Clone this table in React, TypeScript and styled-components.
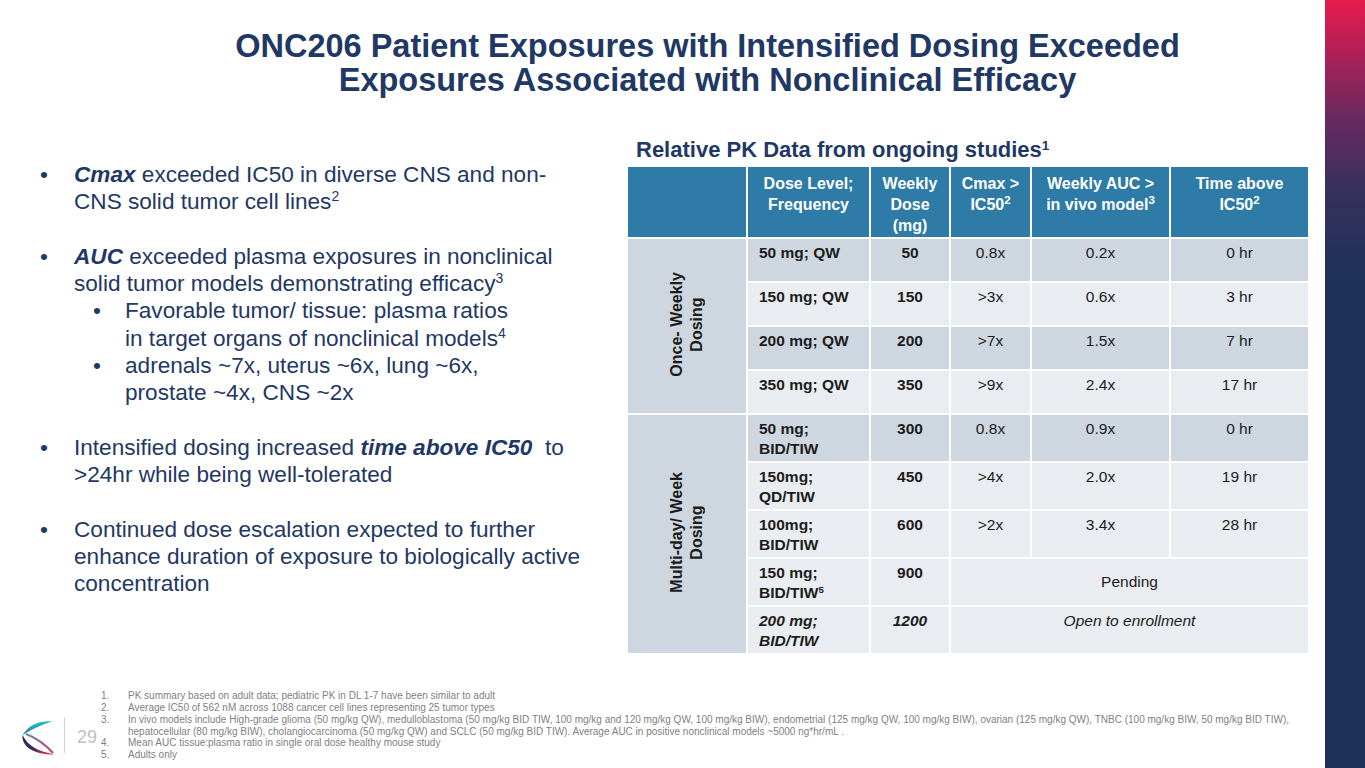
import React from 'react';
import styled, { createGlobalStyle } from 'styled-components';

const Global = createGlobalStyle`
  html, body { margin: 0; padding: 0; background: #fff; }
  body { font-family: "Liberation Sans", Arial, sans-serif; }
  * { box-sizing: border-box; }
`;

const NAVY = '#1f3864';

const Slide = styled.div`
  width: 1365px;
  height: 768px;
  display: flex;
  overflow: hidden;
  background: #fff;
`;

const Main = styled.div`
  flex: 1;
  min-width: 0;
  display: flex;
  flex-direction: column;
`;

const Stripe = styled.div`
  width: 40px;
  flex: none;
  background: linear-gradient(
    to bottom,
    #e71b4c 0%,
    #a6225a 8%,
    #6a295f 15%,
    #36305c 25%,
    #1e3258 36%,
    #1d3158 100%
  );
`;

const Title = styled.h1`
  margin: 0;
  padding: 29px 0 0 90px;
  text-align: center;
  font-size: 32.5px;
  line-height: 34px;
  font-weight: 700;
  color: ${NAVY};
`;

const Content = styled.div`
  display: flex;
  align-items: flex-start;
`;

const LeftCol = styled.div`
  width: 626px;
  flex: none;
  padding: 64px 0 0 40px;
  color: ${NAVY};
  font-size: 22.6px;
  line-height: 27.3px;
`;

const Bullet = styled.div<{ $first?: boolean }>`
  display: flex;
  margin-top: ${p => (p.$first ? 0 : 27.3)}px;
`;

const SubBullet = styled.div`
  display: flex;
  margin-left: 19px;
`;

const Dot = styled.span<{ $w: number }>`
  width: ${p => p.$w}px;
  flex: none;
`;

const Text = styled.div`
  white-space: nowrap;
`;

const Em = styled.b`
  font-weight: 700;
  font-style: italic;
`;

const Sup = styled.sup<{ $size?: number }>`
  font-size: ${p => p.$size ?? 0.62}em;
  line-height: 0;
  vertical-align: 0.55em;
`;

const RightCol = styled.div`
  flex: none;
  padding-top: 40px;
`;

const TableTitle = styled.h2`
  margin: 0 0 2px;
  padding-left: 10px;
  font-size: 22px;
  line-height: 26px;
  font-weight: 700;
  color: ${NAVY};
`;

const Table = styled.table`
  border-collapse: collapse;
  table-layout: fixed;
  width: 682px;
  font-family: "Liberation Sans", Arial, sans-serif;
`;

const Row = styled.tr<{ $h: number; $dark?: boolean }>`
  height: ${p => p.$h}px;
  background: ${p => (p.$dark ? '#ced6df' : '#e9ecf0')};
`;

const Th = styled.th`
  background: #2d7ba6;
  color: #fff;
  font-weight: 700;
  font-size: 16px;
  line-height: 21px;
  text-align: center;
  vertical-align: top;
  padding: 6px 3px 0;
  border: 2px solid #fff;
`;

const Td = styled.td<{ $bold?: boolean; $left?: boolean; $italic?: boolean; $middle?: boolean }>`
  border: 2px solid #fff;
  font-size: 15.5px;
  line-height: 20px;
  color: #1c1c1c;
  font-weight: ${p => (p.$bold ? 700 : 400)};
  font-style: ${p => (p.$italic ? 'italic' : 'normal')};
  text-align: ${p => (p.$left ? 'left' : 'center')};
  vertical-align: ${p => (p.$middle ? 'middle' : 'top')};
  padding: ${p => (p.$middle ? '0 4px' : p.$left ? '4px 4px 0 11px' : '4px 4px 0')};
`;

const LabelCell = styled.td`
  border: 2px solid #fff;
  background: #ced6df;
  text-align: center;
  vertical-align: middle;
  padding: 0;
`;

const Vertical = styled.div`
  display: inline-block;
  writing-mode: vertical-rl;
  transform: rotate(180deg);
  font-size: 16px;
  line-height: 20px;
  font-weight: 700;
  color: #1c1c1c;
  text-align: center;
`;

const Footer = styled.footer`
  margin-top: auto;
  display: flex;
  align-items: flex-start;
  padding: 0 0 7px 20px;
`;

const LogoSvg = styled.svg`
  flex: none;
  margin-top: 29px;
`;

const Separator = styled.div`
  width: 1px;
  height: 36px;
  flex: none;
  margin: 27px 0 0 8px;
  background: #d4d4d4;
`;

const PageNum = styled.div`
  width: 36px;
  flex: none;
  margin-top: 37px;
  padding-left: 12px;
  font-size: 18px;
  line-height: 20px;
  color: #c0c0c0;
`;

const Notes = styled.ol`
  margin: 0;
  padding: 0;
  list-style: none;
  font-size: 10px;
  line-height: 11.8px;
  color: #7f7f7f;
`;

const Note = styled.li`
  display: flex;
  white-space: nowrap;
`;

const NoteNum = styled.span`
  width: 27px;
  flex: none;
`;

const Logo = () => (
  <LogoSvg viewBox="0 0 36 38" width={36} height={38}>
    <defs>
      <linearGradient id="lgTop" x1="1" y1="0" x2="0" y2="1">
        <stop offset="0" stopColor="#1fcaca" />
        <stop offset="0.5" stopColor="#22a8bb" />
        <stop offset="1" stopColor="#4a7c9b" />
      </linearGradient>
      <linearGradient id="lgMid" x1="0" y1="0" x2="1" y2="1">
        <stop offset="0" stopColor="#6f8aa6" />
        <stop offset="1" stopColor="#c8416b" />
      </linearGradient>
      <linearGradient id="lgBot" x1="0" y1="0" x2="1" y2="1">
        <stop offset="0" stopColor="#15285a" />
        <stop offset="0.5" stopColor="#352c5c" />
        <stop offset="0.8" stopColor="#b3265a" />
        <stop offset="1" stopColor="#ea1f4f" />
      </linearGradient>
    </defs>
    <path d="M32 2.5 C22 1.5 8 5.5 2.5 16.5 C10 11 20 6.5 32 2.5 Z" fill="url(#lgTop)" />
    <path d="M6 15 C14 18 24 24 33 34" stroke="url(#lgMid)" strokeWidth="2.2" fill="none" />
    <path d="M2.5 16 C1.5 28 14 35.5 34.5 35.5 C17 32 8 27 2.5 16 Z" fill="url(#lgBot)" />
  </LogoSvg>
);

export default function App() {
  return (
    <Slide>
      <Global />
      <Main>
        <Title>
          ONC206 Patient Exposures with Intensified Dosing Exceeded
          <br />
          Exposures Associated with Nonclinical Efficacy
        </Title>
        <Content>
          <LeftCol>
            <Bullet $first>
              <Dot $w={34}>•</Dot>
              <Text>
                <Em>Cmax</Em> exceeded IC50 in diverse CNS and non-
                <br />
                CNS solid tumor cell lines<Sup>2</Sup>
              </Text>
            </Bullet>
            <Bullet>
              <Dot $w={34}>•</Dot>
              <div>
                <Text>
                  <Em>AUC</Em> exceeded plasma exposures in nonclinical
                  <br />
                  solid tumor models demonstrating efficacy<Sup>3</Sup>
                </Text>
                <SubBullet>
                  <Dot $w={32}>•</Dot>
                  <Text>
                    Favorable tumor/ tissue: plasma ratios
                    <br />
                    in target organs of nonclinical models<Sup>4</Sup>
                  </Text>
                </SubBullet>
                <SubBullet>
                  <Dot $w={32}>•</Dot>
                  <Text>
                    adrenals ~7x, uterus ~6x, lung ~6x,
                    <br />
                    prostate ~4x, CNS ~2x
                  </Text>
                </SubBullet>
              </div>
            </Bullet>
            <Bullet>
              <Dot $w={34}>•</Dot>
              <Text>
                Intensified dosing increased <Em>time above IC50</Em>&nbsp; to
                <br />
                &gt;24hr while being well-tolerated
              </Text>
            </Bullet>
            <Bullet>
              <Dot $w={34}>•</Dot>
              <Text>
                Continued dose escalation expected to further
                <br />
                enhance duration of exposure to biologically active
                <br />
                concentration
              </Text>
            </Bullet>
          </LeftCol>
          <RightCol>
            <TableTitle>
              Relative PK Data from ongoing studies<Sup>1</Sup>
            </TableTitle>
            <Table>
              <colgroup>
                <col style={{ width: 120 }} />
                <col style={{ width: 123 }} />
                <col style={{ width: 80 }} />
                <col style={{ width: 81 }} />
                <col style={{ width: 139 }} />
                <col style={{ width: 139 }} />
              </colgroup>
              <thead>
                <tr style={{ height: 72 }}>
                  <Th />
                  <Th>
                    Dose Level;
                    <br />
                    Frequency
                  </Th>
                  <Th>
                    Weekly
                    <br />
                    Dose
                    <br />
                    (mg)
                  </Th>
                  <Th>
                    Cmax &gt;
                    <br />
                    IC50<Sup $size={0.72}>2</Sup>
                  </Th>
                  <Th>
                    Weekly AUC &gt;
                    <br />
                    in vivo model<Sup $size={0.72}>3</Sup>
                  </Th>
                  <Th>
                    Time above
                    <br />
                    IC50<Sup $size={0.72}>2</Sup>
                  </Th>
                </tr>
              </thead>
              <tbody>
                <Row $h={44} $dark>
                  <LabelCell rowSpan={4}>
                    <Vertical>
                      Once- Weekly
                      <br />
                      Dosing
                    </Vertical>
                  </LabelCell>
                  <Td $bold $left>50 mg; QW</Td>
                  <Td $bold>50</Td>
                  <Td>0.8x</Td>
                  <Td>0.2x</Td>
                  <Td>0 hr</Td>
                </Row>
                <Row $h={44}>
                  <Td $bold $left>150 mg; QW</Td>
                  <Td $bold>150</Td>
                  <Td>&gt;3x</Td>
                  <Td>0.6x</Td>
                  <Td>3 hr</Td>
                </Row>
                <Row $h={44} $dark>
                  <Td $bold $left>200 mg; QW</Td>
                  <Td $bold>200</Td>
                  <Td>&gt;7x</Td>
                  <Td>1.5x</Td>
                  <Td>7 hr</Td>
                </Row>
                <Row $h={44}>
                  <Td $bold $left>350 mg; QW</Td>
                  <Td $bold>350</Td>
                  <Td>&gt;9x</Td>
                  <Td>2.4x</Td>
                  <Td>17 hr</Td>
                </Row>
                <Row $h={48} $dark>
                  <LabelCell rowSpan={5}>
                    <Vertical>
                      Multi-day/ Week
                      <br />
                      Dosing
                    </Vertical>
                  </LabelCell>
                  <Td $bold $left>
                    50 mg;
                    <br />
                    BID/TIW
                  </Td>
                  <Td $bold>300</Td>
                  <Td>0.8x</Td>
                  <Td>0.9x</Td>
                  <Td>0 hr</Td>
                </Row>
                <Row $h={48}>
                  <Td $bold $left>
                    150mg;
                    <br />
                    QD/TIW
                  </Td>
                  <Td $bold>450</Td>
                  <Td>&gt;4x</Td>
                  <Td>2.0x</Td>
                  <Td>19 hr</Td>
                </Row>
                <Row $h={48}>
                  <Td $bold $left>
                    100mg;
                    <br />
                    BID/TIW
                  </Td>
                  <Td $bold>600</Td>
                  <Td>&gt;2x</Td>
                  <Td>3.4x</Td>
                  <Td>28 hr</Td>
                </Row>
                <Row $h={48}>
                  <Td $bold $left>
                    150 mg;
                    <br />
                    BID/TIW<Sup>5</Sup>
                  </Td>
                  <Td $bold>900</Td>
                  <Td colSpan={3} $middle>Pending</Td>
                </Row>
                <Row $h={48}>
                  <Td $bold $left $italic>
                    200 mg;
                    <br />
                    BID/TIW
                  </Td>
                  <Td $bold $italic>1200</Td>
                  <Td colSpan={3} $italic>Open to enrollment</Td>
                </Row>
              </tbody>
            </Table>
          </RightCol>
        </Content>
        <Footer>
          <Logo />
          <Separator />
          <PageNum>29</PageNum>
          <Notes>
            <Note>
              <NoteNum>1.</NoteNum>
              <span>PK summary based on adult data; pediatric PK in DL 1-7 have been similar to adult</span>
            </Note>
            <Note>
              <NoteNum>2.</NoteNum>
              <span>Average IC50 of 562 nM across 1088 cancer cell lines representing 25 tumor types</span>
            </Note>
            <Note>
              <NoteNum>3.</NoteNum>
              <span>
                In vivo models include High-grade glioma (50 mg/kg QW), medulloblastoma (50 mg/kg BID TIW, 100 mg/kg and 120 mg/kg QW, 100 mg/kg BIW), endometrial (125 mg/kg QW, 100 mg/kg BIW), ovarian (125 mg/kg QW), TNBC (100 mg/kg BIW, 50 mg/kg BID TIW),
                <br />
                hepatocellular (80 mg/kg BIW), cholangiocarcinoma (50 mg/kg QW) and SCLC (50 mg/kg BID TIW). Average AUC in positive nonclinical models ~5000 ng*hr/mL .
              </span>
            </Note>
            <Note>
              <NoteNum>4.</NoteNum>
              <span>Mean AUC tissue:plasma ratio in single oral dose healthy mouse study</span>
            </Note>
            <Note>
              <NoteNum>5.</NoteNum>
              <span>Adults only</span>
            </Note>
          </Notes>
        </Footer>
      </Main>
      <Stripe />
    </Slide>
  );
}
